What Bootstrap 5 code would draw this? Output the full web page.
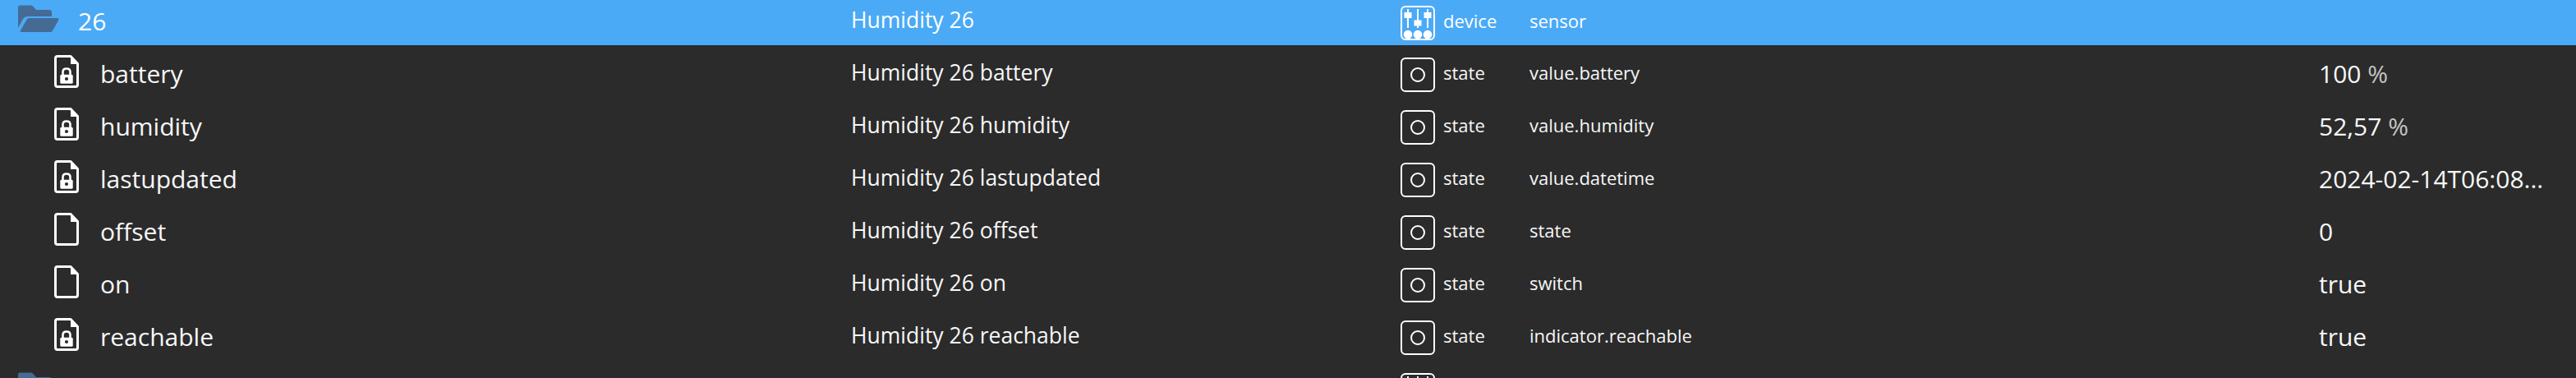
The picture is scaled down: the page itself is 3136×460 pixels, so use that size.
<!DOCTYPE html>
<html lang="en">
<head>
    <meta charset="UTF-8">
    <meta name="viewport" content="width=device-width, initial-scale=1.0">
    <title>Objects</title>
    <link href="https://cdn.jsdelivr.net/npm/bootstrap@5.3.0/dist/css/bootstrap.min.css" rel="stylesheet">
    <script src="https://cdn.jsdelivr.net/npm/bootstrap@5.3.0/dist/js/bootstrap.bundle.min.js"></script>
    <style>
        html, body {
            height: 460px;
            background-color: #2b2b2b;
        }
        body {
            font-family: "Open Sans", "Noto Sans", sans-serif;
            color: #f7f7f7;
        }
        .obj-tree {
            height: 460px;
            gap: 8px;
        }
        .obj-row {
            display: grid;
            grid-template-columns: 1036px 669px 157px 961px 313px;
            flex: none;
            height: 56px;
            align-items: center;
        }
        .obj-row.is-selected {
            height: 55px;
            background-color: #4baaf6;
            color: #fff;
        }
        .obj-name {
            display: flex;
            align-items: center;
            padding-left: 66px;
            padding-bottom: 4px;
            font-size: 30px;
        }
        .is-folder .obj-name {
            padding-left: 22px;
        }
        .obj-name svg {
            flex: none;
            width: 30px;
            height: 40px;
            margin-right: 26px;
            margin-top: -4px;
        }
        .is-folder .obj-name svg {
            width: 50px;
            height: 34px;
            margin-right: 23px;
            margin-top: -6px;
        }
        .obj-title {
            font-size: 26.5px;
            padding-bottom: 5px;
        }
        .obj-type {
            display: flex;
            align-items: center;
            font-size: 22px;
        }
        .obj-type svg {
            flex: none;
            width: 42px;
            height: 42px;
            margin-right: 10px;
        }
        .obj-type-label {
            padding-bottom: 5px;
        }
        .obj-role {
            font-size: 22px;
            padding-bottom: 5px;
        }
        .obj-value {
            font-size: 30px;
            padding-bottom: 3px;
        }
        .obj-unit {
            color: #c4c4c4;
        }
    </style>
</head>
<body class="overflow-hidden">

<!-- icons -->
<svg class="d-none">
    <symbol id="ic-folder" viewBox="0 0 50 34">
        <path fill="#456b95" d="M2 .5H15Q17 .5 18 1.5L22 6H38Q41 6 41 9V14H12Q8 14 6 17L0 28V3Q0 .5 2 .5Z"/>
        <path fill="#456b95" d="M11 17Q12 16 14 16H48Q50 16 49.5 18L42 31.5Q41 33 39 33H4Q2 33 3 31Z"/>
    </symbol>
    <symbol id="ic-file" viewBox="0 0 30 40">
        <path fill="none" stroke="#fff" stroke-width="3" stroke-linejoin="round" d="M4 1.5H20L28.5 10.5V36Q28.5 38.5 26 38.5H4Q1.5 38.5 1.5 36V4Q1.5 1.5 4 1.5Z"/>
        <path fill="#fff" d="M20 2V11H28.5Z"/>
    </symbol>
    <symbol id="ic-file-lock" viewBox="0 0 30 40">
        <path fill="none" stroke="#fff" stroke-width="3" stroke-linejoin="round" d="M4 1.5H20L28.5 10.5V36Q28.5 38.5 26 38.5H4Q1.5 38.5 1.5 36V4Q1.5 1.5 4 1.5Z"/>
        <path fill="#fff" d="M20 2V11H28.5Z"/>
        <path fill="none" stroke="#fff" stroke-width="2.6" d="M10.5 24V20.5Q10.5 16.5 15 16.5T19.5 20.5V24"/>
        <rect x="7.3" y="23.7" width="15.4" height="11" rx="1.5" fill="#fff"/>
        <circle cx="15" cy="29" r="2.1" fill="#2b2b2b"/>
    </symbol>
    <symbol id="ic-device" viewBox="0 0 42 42">
        <rect x="1" y="1" width="40" height="40" rx="5" fill="none" stroke="#fff" stroke-width="2"/>
        <path stroke="#fff" stroke-width="2" d="M9 4V27M21 4V27M33 4V27"/>
        <path fill="#fff" d="M4.500 8H13.500V15H4.500ZM16.500 17.500H25.500V24.500H16.500ZM28.500 8H37.500V15H28.500Z"/>
        <circle cx="9" cy="35" r="5.300" fill="#fff"/>
        <circle cx="21" cy="35" r="5.300" fill="#fff"/>
        <circle cx="33" cy="35" r="5.300" fill="#fff"/>
    </symbol>
    <symbol id="ic-state" viewBox="0 0 42 42">
        <rect x="1" y="1" width="40" height="40" rx="5" fill="none" stroke="#fff" stroke-width="2"/>
        <circle cx="21" cy="21" r="8" fill="none" stroke="#fff" stroke-width="2"/>
    </symbol>
</svg>

<div class="obj-tree d-flex flex-column overflow-hidden">
    <div class="obj-row is-selected is-folder">
        <div class="obj-name"><svg><use href="#ic-folder"/></svg>26</div>
        <div class="obj-title">Humidity 26</div>
        <div class="obj-type"><svg><use href="#ic-device"/></svg><span class="obj-type-label">device</span></div>
        <div class="obj-role">sensor</div>
        <div class="obj-value"></div>
    </div>
    <div class="obj-row">
        <div class="obj-name"><svg><use href="#ic-file-lock"/></svg>battery</div>
        <div class="obj-title">Humidity 26 battery</div>
        <div class="obj-type"><svg><use href="#ic-state"/></svg><span class="obj-type-label">state</span></div>
        <div class="obj-role">value.battery</div>
        <div class="obj-value">100 <span class="obj-unit">%</span></div>
    </div>
    <div class="obj-row">
        <div class="obj-name"><svg><use href="#ic-file-lock"/></svg>humidity</div>
        <div class="obj-title">Humidity 26 humidity</div>
        <div class="obj-type"><svg><use href="#ic-state"/></svg><span class="obj-type-label">state</span></div>
        <div class="obj-role">value.humidity</div>
        <div class="obj-value">52,57 <span class="obj-unit">%</span></div>
    </div>
    <div class="obj-row">
        <div class="obj-name"><svg><use href="#ic-file-lock"/></svg>lastupdated</div>
        <div class="obj-title">Humidity 26 lastupdated</div>
        <div class="obj-type"><svg><use href="#ic-state"/></svg><span class="obj-type-label">state</span></div>
        <div class="obj-role">value.datetime</div>
        <div class="obj-value">2024-02-14T06:08...</div>
    </div>
    <div class="obj-row">
        <div class="obj-name"><svg><use href="#ic-file"/></svg>offset</div>
        <div class="obj-title">Humidity 26 offset</div>
        <div class="obj-type"><svg><use href="#ic-state"/></svg><span class="obj-type-label">state</span></div>
        <div class="obj-role">state</div>
        <div class="obj-value">0</div>
    </div>
    <div class="obj-row">
        <div class="obj-name"><svg><use href="#ic-file"/></svg>on</div>
        <div class="obj-title">Humidity 26 on</div>
        <div class="obj-type"><svg><use href="#ic-state"/></svg><span class="obj-type-label">state</span></div>
        <div class="obj-role">switch</div>
        <div class="obj-value">true</div>
    </div>
    <div class="obj-row">
        <div class="obj-name"><svg><use href="#ic-file-lock"/></svg>reachable</div>
        <div class="obj-title">Humidity 26 reachable</div>
        <div class="obj-type"><svg><use href="#ic-state"/></svg><span class="obj-type-label">state</span></div>
        <div class="obj-role">indicator.reachable</div>
        <div class="obj-value">true</div>
    </div>
    <div class="obj-row is-folder">
        <div class="obj-name"><svg><use href="#ic-folder"/></svg></div>
        <div class="obj-title"></div>
        <div class="obj-type"><svg><use href="#ic-device"/></svg></div>
        <div class="obj-role"></div>
        <div class="obj-value"></div>
    </div>
</div>

</body>
</html>
